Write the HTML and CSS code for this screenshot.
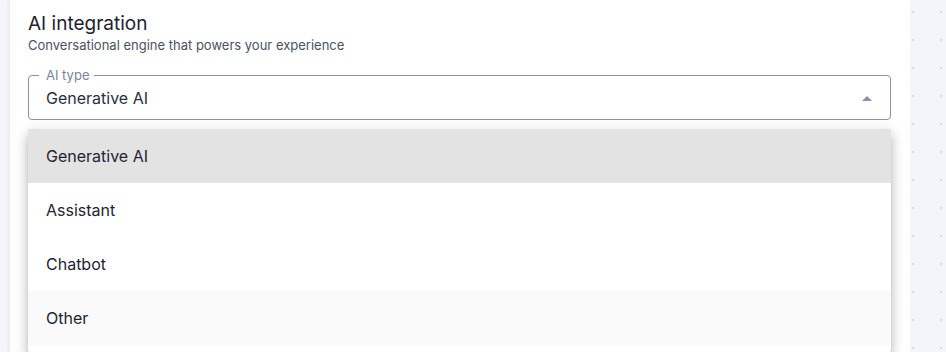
FILE: index.html
```html
<!DOCTYPE html>
<html lang="en">
<head>
    <meta charset="UTF-8">
    <meta name="viewport" content="width=device-width, initial-scale=1.0">
    <title>AI integration</title>
    <link rel="stylesheet" href="styles.css">
</head>
<body>

    <div class="page">
        <div class="gutter"></div>

        <div class="card">
            <!-- Section header -->
            <h2 class="section-title">AI integration</h2>
            <p class="section-sub">Conversational engine that powers your experience</p>

            <!-- Select field, opened -->
            <div class="select">
                <fieldset class="select-outline">
                    <legend>AI type</legend>
                </fieldset>
                <div class="select-value">Generative AI</div>
                <svg class="select-arrow" width="10" height="5" viewBox="0 0 10 5">
                    <path d="M0 5 L5 0 L10 5 Z" fill="#8c93a6"/>
                </svg>

                <ul class="menu">
                    <li class="menu-item selected">Generative AI</li>
                    <li class="menu-item">Assistant</li>
                    <li class="menu-item">Chatbot</li>
                    <li class="menu-item hover">Other</li>
                </ul>
            </div>
        </div>

        <div class="dots"></div>
    </div>

</body>
</html>
```

FILE: styles.css
```css
body {
    font-family: Inter, "Noto Sans", sans-serif;
    margin: 0;
    padding: 0;
    background-color: #f4f5f9;
    color: #1f2433;
    overflow: hidden;
}

.page {
    display: flex;
    height: 352px;
}

.gutter {
    width: 10px;
    background-color: #f4f5f9;
}

.card {
    width: 900px;
    box-sizing: border-box;
    background-color: white;
    padding: 12px 19px 0 18px;
    box-shadow: 0 0 4px rgba(30, 40, 70, 0.12);
}

.section-title {
    font-size: 19px;
    font-weight: 400;
    line-height: 24px;
    margin: 0;
    color: #1d2230;
}

.section-sub {
    font-size: 13px;
    line-height: 18px;
    margin: 0 0 21px 0;
    color: #4a5263;
}

.select {
    position: relative;
    height: 45px;
}

.select-outline {
    position: absolute;
    top: -7px;
    left: 0;
    right: 0;
    bottom: 0;
    margin: 0;
    padding: 0 10px;
    border: 1px solid #8c93a6;
    border-radius: 4px;
}

.select-outline legend {
    font-size: 13px;
    line-height: 14px;
    color: #7c8396;
    padding: 0 5px 0 7px;
}

.select-value {
    position: relative;
    padding: 13px 18px 0 18px;
    font-size: 16px;
    line-height: 20px;
    color: #2a2f3b;
}

.select-arrow {
    position: absolute;
    right: 19px;
    top: 21px;
}

.menu {
    position: absolute;
    top: 54px;
    left: 0;
    right: 0;
    margin: 0;
    padding: 0 0 8px 0;
    list-style: none;
    background-color: white;
    border-radius: 4px;
    box-shadow: 0 5px 5px -3px rgba(0, 0, 0, 0.2),
                0 8px 10px 1px rgba(0, 0, 0, 0.14),
                0 3px 14px 2px rgba(0, 0, 0, 0.12);
}

.menu-item {
    height: 54px;
    line-height: 54px;
    padding: 0 18px;
    font-size: 16px;
    color: #1f2433;
}

.menu-item.selected {
    background-color: #e3e3e3;
}

.menu-item.hover {
    background-color: #fafafa;
}

.dots {
    flex: 1;
    background-color: #f4f5fa;
    background-image: radial-gradient(circle, #dcdee5 1.2px, transparent 1.7px);
    background-size: 28px 28px;
    background-position: -11px -2px;
}
```
